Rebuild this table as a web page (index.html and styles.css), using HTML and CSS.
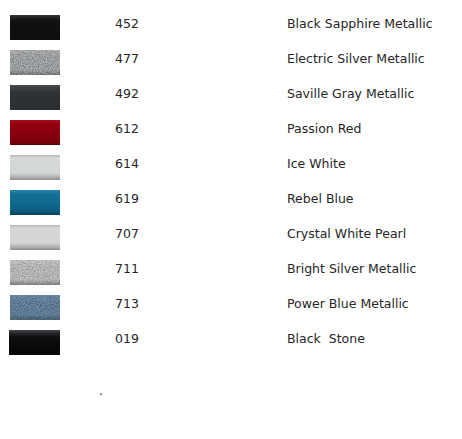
FILE: index.html
```html
<!DOCTYPE html>
<html>
<head>
<meta charset="utf-8">
<link rel="stylesheet" href="styles.css">
</head>
<body>
<svg class="defs" width="0" height="0" aria-hidden="true">
  <defs>
    <filter id="grain" x="0" y="0" width="100%" height="100%">
      <feTurbulence type="fractalNoise" baseFrequency="0.85" numOctaves="2" seed="3" result="n"/>
      <feColorMatrix in="n" type="matrix" values="2.2 0 0 0 -0.65  2.2 0 0 0 -0.65  2.2 0 0 0 -0.65  0 0 0 0 0.28" result="w"/>
      <feComposite in="w" in2="SourceGraphic" operator="in" result="wc"/>
      <feMerge><feMergeNode in="SourceGraphic"/><feMergeNode in="wc"/></feMerge>
    </filter>
    <filter id="grainsoft" x="0" y="0" width="100%" height="100%">
      <feTurbulence type="fractalNoise" baseFrequency="0.85" numOctaves="2" seed="7" result="n"/>
      <feColorMatrix in="n" type="matrix" values="2 0 0 0 -0.55  2 0 0 0 -0.55  2 0 0 0 -0.55  0 0 0 0 0.16" result="w"/>
      <feComposite in="w" in2="SourceGraphic" operator="in" result="wc"/>
      <feMerge><feMergeNode in="SourceGraphic"/><feMergeNode in="wc"/></feMerge>
    </filter>
  </defs>
</svg>
<div class="list">
  <div class="row"><div class="sw black"></div><span class="code">452</span><span class="name">Black Sapphire Metallic</span></div>
  <div class="row"><div class="sw silver"><svg width="50" height="25"><rect width="50" height="25" fill="#8f9395" filter="url(#grain)"/></svg></div><span class="code">477</span><span class="name">Electric Silver Metallic</span></div>
  <div class="row"><div class="sw gray"></div><span class="code">492</span><span class="name">Saville Gray Metallic</span></div>
  <div class="row"><div class="sw red"></div><span class="code">612</span><span class="name">Passion Red</span></div>
  <div class="row"><div class="sw white"></div><span class="code">614</span><span class="name">Ice White</span></div>
  <div class="row"><div class="sw blue"></div><span class="code">619</span><span class="name">Rebel Blue</span></div>
  <div class="row"><div class="sw pearl"></div><span class="code">707</span><span class="name">Crystal White Pearl</span></div>
  <div class="row"><div class="sw bsilver"><svg width="50" height="25"><rect width="50" height="25" fill="#b0b2b2" filter="url(#grain)"/></svg></div><span class="code">711</span><span class="name">Bright Silver Metallic</span></div>
  <div class="row"><div class="sw pblue"><svg width="50" height="25"><rect width="50" height="25" fill="#426d8d" filter="url(#grainsoft)"/></svg></div><span class="code">713</span><span class="name">Power Blue Metallic</span></div>
  <div class="row"><div class="sw stone"></div><span class="code">019</span><span class="name">Black&nbsp; Stone</span></div>
</div>
<div class="dot">.</div>
</body>
</html>
```
FILE: styles.css
```css
html, body {
  margin: 0;
  padding: 0;
  background: #fff;
}
body {
  font-family: "DejaVu Sans", Verdana, sans-serif;
  font-size: 12.5px;
  color: #262626;
}
.defs {
  position: absolute;
  width: 0;
  height: 0;
}
.list {
  padding-top: 15px;
  padding-left: 10px;
}
.row {
  display: grid;
  grid-template-columns: 105px 172px 1fr;
  height: 35px;
  align-items: start;
}
.sw {
  width: 50px;
  height: 25px;
  position: relative;
  overflow: hidden;
}
.sw svg {
  display: block;
}
.sw::after {
  content: "";
  position: absolute;
  inset: 0;
}
.code, .name {
  line-height: 16px;
  padding-top: 1px;
}
.black {
  background: linear-gradient(#3a3a3c 0, #1e1e20 3px, #111113 6px, #0e0e10 100%);
}
.silver::after {
  background: linear-gradient(rgba(255,255,255,0.12), rgba(0,0,0,0) 30%, rgba(0,0,0,0) 80%, rgba(0,0,0,0.25));
}
.gray {
  background: linear-gradient(#4a4d50 0, #3a3d40 4px, #2f3235 8px, #2c2f32 100%);
}
.red {
  background: linear-gradient(#a8101c 0, #950010 4px, #8a000e 12px, #7c000c 22px, #5a0008 100%);
}
.white {
  background: linear-gradient(#b5b7b5 0, #d6dad6 3px, #d2d6d2 18px, #b0b2b0 22px, #8e908e 100%);
}
.blue {
  background: linear-gradient(#2a86aa 0, #146f94 4px, #0e6a8f 14px, #0a5a7c 21px, #063f58 100%);
}
.pearl {
  background: linear-gradient(#b8b8b8 0, #d7d7d7 3px, #d4d4d4 18px, #b0b0b0 22px, #8a8a8a 100%);
}
.bsilver::after {
  background: linear-gradient(rgba(255,255,255,0.15), rgba(0,0,0,0) 30%, rgba(0,0,0,0) 80%, rgba(0,0,0,0.3));
}
.pblue::after {
  background: linear-gradient(rgba(255,255,255,0.08), rgba(0,0,0,0) 30%, rgba(0,0,0,0) 80%, rgba(0,0,0,0.25));
}
.stone {
  width: 51px;
  margin-left: -1px;
  background: linear-gradient(#49474b 0, #2a282c 3px, #0e0d0f 7px, #050505 100%);
}
.dot {
  margin-left: 99px;
  margin-top: 20px;
  font-size: 12px;
  line-height: 12px;
  color: #222;
}
```
